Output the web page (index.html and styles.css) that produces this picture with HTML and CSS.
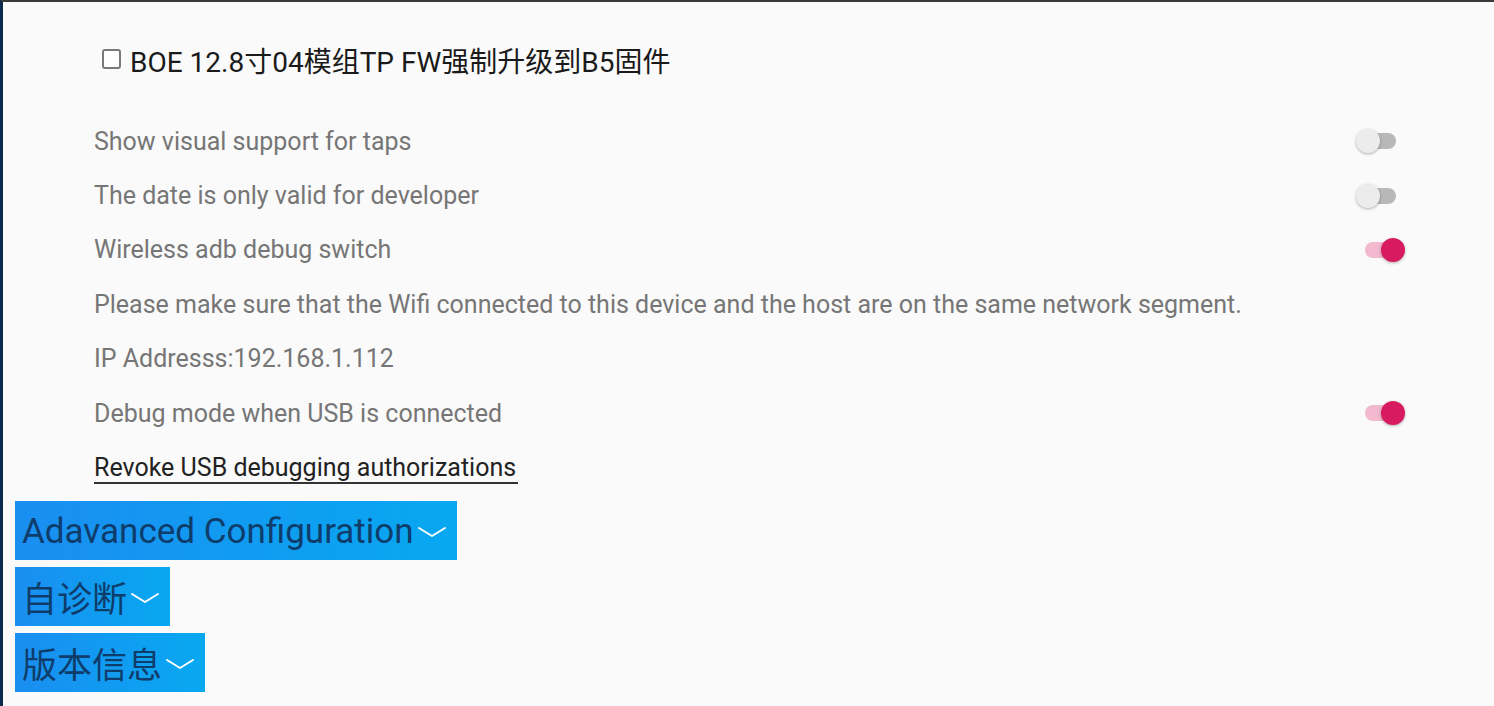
FILE: index.html
```html
<!DOCTYPE html>
<html>
<head>
<meta charset="utf-8">
<link rel="stylesheet" href="styles.css">
</head>
<body>
<div class="screen">
  <label class="check-row"><span class="checkbox"></span><span class="check-text">BOE 12.8寸04模组TP FW强制升级到B5固件</span></label>
  <ul class="settings">
    <li class="row"><span class="label">Show visual support for taps</span><span class="switch off"><span class="track"></span><span class="thumb"></span></span></li>
    <li class="row"><span class="label">The date is only valid for developer</span><span class="switch off"><span class="track"></span><span class="thumb"></span></span></li>
    <li class="row"><span class="label">Wireless adb debug switch</span><span class="switch on"><span class="track"></span><span class="thumb"></span></span></li>
    <li class="row"><span class="label">Please make sure that the Wifi connected to this device and the host are on the same network segment.</span></li>
    <li class="row"><span class="label">IP Addresss:192.168.1.112</span></li>
    <li class="row"><span class="label">Debug mode when USB is connected</span><span class="switch on"><span class="track"></span><span class="thumb"></span></span></li>
    <li class="row"><span class="link">Revoke USB debugging authorizations</span></li>
  </ul>
  <div class="sections">
    <div class="section-btn"><span class="btn-text">Adavanced Configuration</span><svg class="chev" viewBox="0 0 28 12" width="28" height="12"><polyline points="1,2 14,10 27,2" fill="none" stroke="#fff" stroke-width="2" stroke-linecap="round" stroke-linejoin="round"/></svg></div>
    <div class="section-btn cjk"><span class="btn-text">自诊断</span><svg class="chev" viewBox="0 0 28 12" width="28" height="12"><polyline points="1,2 14,10 27,2" fill="none" stroke="#fff" stroke-width="2" stroke-linecap="round" stroke-linejoin="round"/></svg></div>
    <div class="section-btn cjk"><span class="btn-text">版本信息</span><svg class="chev" viewBox="0 0 28 12" width="28" height="12"><polyline points="1,2 14,10 27,2" fill="none" stroke="#fff" stroke-width="2" stroke-linecap="round" stroke-linejoin="round"/></svg></div>
  </div>
</div>
</body>
</html>
```

FILE: styles.css
```css
* { box-sizing: border-box; }
html, body { margin: 0; padding: 0; }
body {
  width: 1494px;
  height: 706px;
  overflow: hidden;
  background: #fafafa;
  font-family: Roboto, "Noto Sans CJK SC", sans-serif;
}
.screen {
  height: 706px;
  border-left: 3px solid #0d2b4d;
  border-top: 2px solid #3a3a3a;
  background: #fafafa;
}
.check-row {
  display: flex;
  align-items: center;
  height: 50px;
  margin-top: 33px;
  padding-left: 99px;
  gap: 9px;
}
.checkbox {
  width: 19px;
  height: 20px;
  border: 2px solid #7a7a7a;
  border-radius: 3px;
  background: #fff;
  margin-top: -2px;
}
.check-text {
  font-size: 28px;
  color: #1a1a1a;
  font-family: Roboto, "Noto Sans CJK SC", sans-serif;
}
.settings {
  list-style: none;
  margin: 29px 0 0 0;
  padding: 0 0 0 91px;
}
.row {
  height: 54.4px;
  display: flex;
  align-items: center;
  justify-content: space-between;
  padding-right: 88px;
}
.label {
  font-size: 25px;
  color: #767676;
}
.link {
  font-size: 25px;
  color: #222;
  border-bottom: 2px solid #333;
  line-height: 28px;
  padding-right: 2px;
  margin-top: 2px;
}
.switch {
  position: relative;
  width: 50px;
  height: 26px;
}
.switch .track {
  position: absolute;
  top: 5px;
  width: 34px;
  height: 16px;
  border-radius: 8px;
}
.switch .thumb {
  position: absolute;
  top: 1px;
  width: 24px;
  height: 24px;
  border-radius: 50%;
  box-shadow: 0 1px 3px rgba(0,0,0,0.3);
}
.switch.off .track { left: 6px; background: #b8b8b8; }
.switch.off .thumb { left: 0; background: #ececec; }
.switch.on .track { left: 9px; background: #f2b8cd; }
.switch.on .thumb { left: 25px; background: #d81b60; }
.sections {
  display: flex;
  flex-direction: column;
  align-items: flex-start;
  gap: 7px;
  margin-top: 6px;
  padding-left: 12px;
}
.section-btn {
  display: flex;
  align-items: center;
  height: 59px;
  padding: 0 11px 0 7px;
  background: linear-gradient(90deg, #1a8ef1, #08a8f1);
  color: #0f3d6b;
  font-size: 35px;
}
.btn-text { margin-top: 3px; }
.section-btn.cjk {
  font-size: 35px;
  font-family: "Noto Sans CJK SC", sans-serif;
}
.section-btn.cjk .btn-text { margin-top: 1px; }
.chev {
  margin-left: 4px;
  margin-top: 3px;
}
```
